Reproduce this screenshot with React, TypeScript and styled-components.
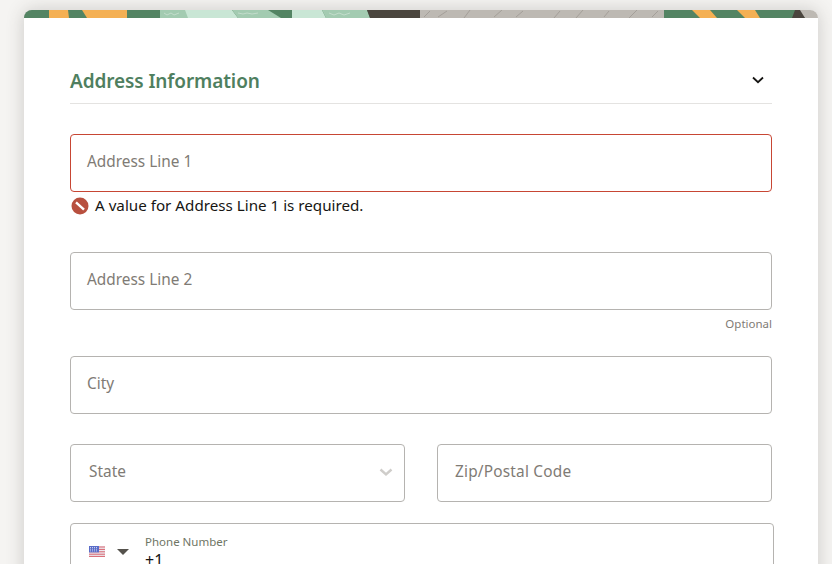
import React from 'react';
import styled, { createGlobalStyle } from 'styled-components';

const Global = createGlobalStyle`
  html, body { margin: 0; padding: 0; height: 564px; overflow: hidden; background: #f5f4f2; }
  * { box-sizing: border-box; }
  body { font-family: "Noto Sans", "Open Sans", sans-serif; }
`;

const Page = styled.div`
  padding: 10px 14px 0 24px;
  height: 564px;
  overflow: hidden;
`;

const Card = styled.section`
  background: #fff;
  border-radius: 8px 8px 0 0;
  box-shadow: 0 0 18px rgba(60, 56, 50, 0.22);
  overflow: hidden;
  height: 600px;
`;

const Banner = styled.svg`
  display: block;
  width: 794px;
  height: 8px;
`;

const Body = styled.div`
  padding: 43px 46px 0;
`;

const SectionHeader = styled.header`
  display: flex;
  align-items: center;
  justify-content: space-between;
  height: 43px;
  border-bottom: 1px solid #e4e3e1;
  padding: 0 7px 4px 0;
`;

const Title = styled.h2`
  margin: 0;
  padding-top: 2px;
  font-size: 19px;
  line-height: 28px;
  font-weight: 600;
  color: #4f7f5f;
  letter-spacing: -0.1px;
`;

const Fields = styled.div`
  display: flex;
  flex-direction: column;
  padding-top: 30px;
`;

const Input = styled.div<{ $error?: boolean; $flex?: boolean }>`
  height: 58px;
  border: 1px solid ${p => (p.$error ? '#c74634' : '#b5b3b0')};
  border-radius: 4px;
  display: flex;
  align-items: center;
  justify-content: space-between;
  padding: 0 11px 3px 16px;
  font-size: 15.4px;
  color: #7f7b75;
  background: #fff;
  ${p => (p.$flex ? 'flex: 1 1 0;' : '')}
`;

const ErrorRow = styled.div`
  display: flex;
  align-items: center;
  gap: 6px;
  height: 28px;
  padding-left: 1px;
  font-size: 15.2px;
  color: #161513;
  margin-bottom: 32px;
`;

const ErrorText = styled.span`
  position: relative;
  top: -1px;
`;

const Hint = styled.div`
  height: 46px;
  padding-top: 7px;
  text-align: right;
  font-size: 11.5px;
  line-height: 14px;
  color: #7f7b75;
`;

const Row = styled.div`
  display: flex;
  gap: 32px;
  margin-top: 30px;
`;

const SelectValue = styled.span`
  padding-left: 2px;
`;

const ZipValue = styled.span`
  padding-left: 1px;
  letter-spacing: 0.2px;
`;

const Phone = styled.div`
  width: 704px;
  height: 58px;
  margin-top: 21px;
  border: 1px solid #b5b3b0;
  border-radius: 4px;
  display: flex;
  padding: 11px 0 0 18px;
`;

const PhoneCountry = styled.div`
  display: flex;
  align-items: center;
  gap: 12px;
  height: 33px;
  width: 56px;
`;

const PhoneField = styled.div`
  display: flex;
  flex-direction: column;
`;

const PhoneLabel = styled.span`
  font-size: 11.5px;
  line-height: 14px;
  color: #6f7565;
`;

const PhoneValue = styled.span`
  font-size: 16px;
  line-height: 22px;
  color: #161513;
`;

const Strip = () => (
  <Banner viewBox="0 0 794 8" preserveAspectRatio="none" aria-hidden="true">
    <rect width="794" height="8" fill="#bdb9b3" />
    <rect width="346" height="8" fill="#538463" />
    <polygon points="25,0 44,0 45,8 25,8" fill="#f4b054" />
    <polygon points="58,0 103,0 103,8 63,8" fill="#f4b054" />
    <polygon points="136,0 208,0 214,8 136,8" fill="#c9e6d5" />
    <polygon points="136,0 161,0 164,8 136,8" fill="#a3cbb1" />
    <polygon points="208,0 244,0 257,8 214,8" fill="#a3cbb1" />
    <polygon points="268,0 298,0 302,8 268,8" fill="#c9e6d5" />
    <polygon points="298,0 343,0 346,8 302,8" fill="#a3cbb1" />
    <polygon points="343,0 396,0 396,8 346,8" fill="#4a453e" />
    <path
      d="M140 3l3 2 4-2 3 2 5-2M214 3l5 1 4-1 5 1 6-1M305 3l5 2 5-2 5 2 6-2"
      stroke="#c2dccb"
      strokeWidth="1"
      fill="none"
    />
    <path
      d="M400 7l6-6M414 7l9-6M440 8l6-8M470 7l8-7M492 7l7-6M530 8l6-7M552 8l7-8M580 7l5-6M605 8l8-8M628 7l6-6"
      stroke="#8f8b84"
      strokeWidth="1"
      opacity=".55"
      fill="none"
    />
    <path d="M640 0h131l10 8H640z" fill="#538463" />
    <polygon points="668,0 686,0 693,8 676,8" fill="#f4b054" />
    <polygon points="713,0 731,0 736,8 721,8" fill="#f4b054" />
    <polygon points="771,0 776,0 781,8 768,8" fill="#4a453e" />
  </Banner>
);

const Chevron = () => (
  <svg width="14" height="14" viewBox="0 0 14 14" fill="none" stroke="#161513" strokeWidth="1.8" aria-hidden="true">
    <path d="M2 4.5 7 9.2 12 4.5" />
  </svg>
);

const SelectChevron = () => (
  <svg width="14" height="14" viewBox="0 0 14 14" fill="none" stroke="#cfcdca" strokeWidth="2.4" aria-hidden="true">
    <path d="M1.5 4.5 7 9.5 12.5 4.5" />
  </svg>
);

const ErrorIcon = () => (
  <svg width="18" height="18" viewBox="0 0 18 18" aria-hidden="true">
    <circle cx="9" cy="9" r="8.5" fill="#b8503f" />
    <path d="M5 5.4 13 12.6" stroke="#fff" strokeWidth="2.4" />
  </svg>
);

const Flag = () => (
  <svg width="16" height="11" viewBox="0 0 16 11" aria-hidden="true">
    <rect width="16" height="11" fill="#eceaf0" />
    <path d="M0 1h16M0 3.4h16M0 5.8h16M0 8.2h16M0 10.4h16" stroke="#d9636d" strokeWidth="1" />
    <rect width="10" height="6.4" fill="#5a6cc8" />
    <path d="M1 1.5h8M1 3.2h8M1 4.9h8" stroke="#e6e9f8" strokeWidth=".8" strokeDasharray="1 1" />
  </svg>
);

const Caret = () => (
  <svg width="12" height="6" viewBox="0 0 12 6" aria-hidden="true">
    <path d="M0 0h12L6 6z" fill="#55524c" />
  </svg>
);

export default function App() {
  return (
    <>
      <Global />
      <Page>
        <Card>
          <Strip />
          <Body>
            <SectionHeader>
              <Title>Address Information</Title>
              <Chevron />
            </SectionHeader>
            <Fields>
              <Input $error>Address Line 1</Input>
              <ErrorRow>
                <ErrorIcon />
                <ErrorText>A value for Address Line 1 is required.</ErrorText>
              </ErrorRow>
              <Input>Address Line 2</Input>
              <Hint>Optional</Hint>
              <Input>City</Input>
              <Row>
                <Input $flex>
                  <SelectValue>State</SelectValue>
                  <SelectChevron />
                </Input>
                <Input $flex>
                  <ZipValue>Zip/Postal Code</ZipValue>
                </Input>
              </Row>
              <Phone>
                <PhoneCountry>
                  <Flag />
                  <Caret />
                </PhoneCountry>
                <PhoneField>
                  <PhoneLabel>Phone Number</PhoneLabel>
                  <PhoneValue>+1</PhoneValue>
                </PhoneField>
              </Phone>
            </Fields>
          </Body>
        </Card>
      </Page>
    </>
  );
}
